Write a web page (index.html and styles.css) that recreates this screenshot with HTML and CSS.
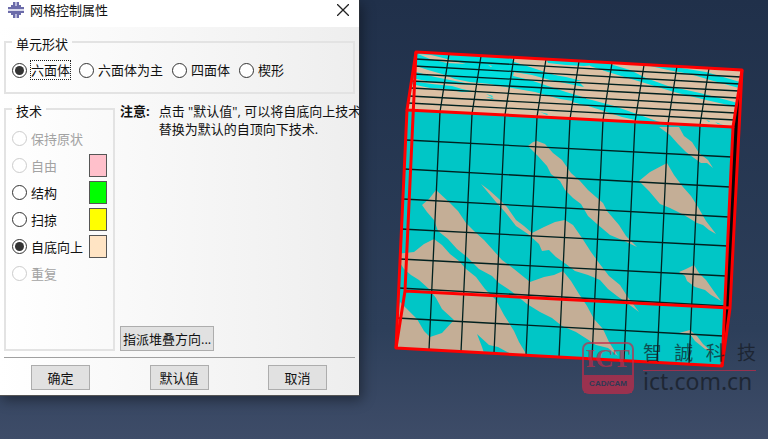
FILE: index.html
```html
<!DOCTYPE html>
<html lang="zh-CN">
<head>
    <meta charset="UTF-8">
    <meta name="viewport" content="width=device-width, initial-scale=1.0">
    <title>网格控制属性</title>
    <link rel="stylesheet" href="styles.css">
</head>
<body>

    <form class="dialog">
        <header class="titlebar">
            <svg class="app-icon" width="16" height="18" viewBox="0 0 16 18" aria-hidden="true">
                <path d="M5 1h6v3h2v2h3v2H0V6h3V4h2zM0 10h16v2h-3v2h-2v3H5v-3H3v-2H0z" fill="#6c6caa"/>
                <path d="M7 1h2v4H7zM7 13h2v4H7z" fill="#b9b9da"/>
                <path d="M0 8h16v2H0z" fill="#d9d9ec"/>
            </svg>
            <h1 class="title">网格控制属性</h1>
            <button type="button" class="close" aria-label="关闭">
                <svg width="12" height="12" viewBox="0 0 12 12" aria-hidden="true">
                    <path d="M0 0l12 12M12 0L0 12" stroke="#222" stroke-width="1.3"/>
                </svg>
            </button>
        </header>

        <div class="content">
            <fieldset class="group shapes">
                <legend>单元形状</legend>
                <label class="option"><input type="radio" name="shape" checked><span class="focused">六面体</span></label>
                <label class="option"><input type="radio" name="shape"><span>六面体为主</span></label>
                <label class="option"><input type="radio" name="shape"><span>四面体</span></label>
                <label class="option"><input type="radio" name="shape"><span>楔形</span></label>
            </fieldset>

            <div class="main">
                <fieldset class="group techniques">
                    <legend>技术</legend>
                    <label class="option"><input type="radio" name="technique" disabled><span>保持原状</span></label>
                    <label class="option"><input type="radio" name="technique" disabled><span>自由</span><i class="swatch pink"></i></label>
                    <label class="option"><input type="radio" name="technique"><span>结构</span><i class="swatch green"></i></label>
                    <label class="option"><input type="radio" name="technique"><span>扫掠</span><i class="swatch yellow"></i></label>
                    <label class="option"><input type="radio" name="technique" checked><span>自底向上</span><i class="swatch bisque"></i></label>
                    <label class="option"><input type="radio" name="technique" disabled><span>重复</span></label>
                </fieldset>

                <div class="side">
                    <div class="note">
                        <strong>注意:</strong>
                        <p>点击 "默认值", 可以将自底向上技术<br>替换为默认的自顶向下技术.</p>
                    </div>
                    <button type="button" class="btn">指派堆叠方向...</button>
                </div>
            </div>

            <footer class="actions">
                <button type="submit" class="btn">确定</button>
                <button type="reset" class="btn">默认值</button>
                <button type="button" class="btn">取消</button>
            </footer>
        </div>
    </form>

    <main class="viewport">
        <svg class="scene" viewBox="360 0 408 439" role="img" aria-label="网格模型">
            <defs>
                <clipPath id="top"><path d="M416 52L742 70L733 127L407 110z"/></clipPath>
                <clipPath id="front"><path d="M407 110L733 127L722 366L396 348z"/></clipPath>
            </defs>

            <!-- right side, seen edge on -->
            <path d="M742 70L730 308L722 366L733 127z" fill="#050808"/>

            <!-- top face -->
            <g clip-path="url(#top)">
                <path d="M400 45h350v90H400z" fill="#dcc0a4"/>
                <g fill="#00dede">
                    <path d="M416 52L511 57L514 62L530 67L548 73L580 83L584 87L550 80L532 75L514 72L513 76L530 80L548 86L566 92L586 98L586 103L560 99L535 92L512 88L490 84L470 82L455 79L442 74L428 70L416 66z"/>
                    <path d="M412 71L435 77L455 81L476 85L452 84L432 82L411 78z"/>
                    <path d="M411 81L432 84L452 86L462 89L476 92L462 92L446 89L430 88L411 84z"/>
                    <path d="M486 94l7 2-1 1zM486 97l8 1-2 1z"/>
                    <path d="M546 59L600 61L610 64L584 66L566 65L548 63z"/>
                    <path d="M548 74L566 77L582 81L566 81z"/>
                    <path d="M590 60L610 64L630 70L646 78L668 86L700 93L738 103L737 107L706 100L674 92L648 84L628 78L608 72L590 66z"/>
                    <path d="M646 65L675 67L706 72L740 82L739 88L710 80L690 74L668 70z"/>
                    <path d="M572 96L592 100L614 106L634 113L668 125L640 121L622 117L604 111L588 106L572 102z"/>
                    <path d="M540 112l8 2-1 1zM551 115l9 3-4-1zM706 120l4 1-1 1zM715 122l8 3-5-1z"/>
                </g>
                <path d="M418 54L431 55L447 59L466 64L447 63L430 59zM488 65l4 1-1 1zM495 67l13 5-3-1z" fill="#dcc0a4"/>
            </g>

            <!-- front face -->
            <g clip-path="url(#front)">
                <path d="M390 105h350v265H390z" fill="#00c6c6"/>
                <g fill="#c4ae96">
                    <path d="M528 146L533 142L537 141L545 144L553 153L562 160L571 173L580 181L588 190L596 197L603 203L607 211L619 225L626 236L637 247L622 240L610 235L597 224L588 216L581 204L573 198L565 190L560 181L551 174L547 166L537 155z"/>
                    <path d="M659 127L679 127L684 136L692 142L699 153L708 160L713 168L707 163L701 163L694 158L686 152L678 144L670 135z"/>
                    <path d="M639 181L650 172L667 163L674 175L683 187L691 196L698 207L706 221L716 234L709 230L703 225L697 223L684 215L670 208L660 204L649 191z"/>
                    <path d="M679 272L686 269L694 265L699 273L706 280L713 290L721 301L711 295L705 290L695 287L687 281L685 276z"/>
                    <path d="M679 333L690 330L697 336L703 344L712 352L705 349L695 341L690 334z"/>
                    <path d="M481 184L489 190L499 199L507 207L516 220L524 226L532 233L544 227L555 222L565 220L573 225L582 238L591 252L599 263L609 276L620 285L627 296L639 312L627 303L617 296L608 289L600 280L588 275L575 271L566 264L556 257L549 250L542 251L539 244L528 234L516 226L505 212L496 202z"/>
                    <path d="M422 205L429 199L436 190L449 202L458 211L466 223L474 231L484 240L493 250L502 260L514 269L530 282L544 277L554 275L563 271L571 281L579 294L587 306L594 319L603 329L609 342L618 356L608 348L596 345L587 339L576 332L562 326L552 318L540 312L527 304L511 291L499 283L492 276L479 269L467 257L457 249L448 239L438 231L434 220L427 212z"/>
                    <path d="M394 254L414 252L424 244L434 239L442 245L450 254L459 261L466 269L476 277L485 289L496 300L504 315L514 331L519 342L528 357L509 353L498 347L489 345L477 334L482 347L485 356L392 352L400 302L407 309L417 319L424 331L430 337L442 333L454 320L442 309L436 298L429 289L419 280L411 275L404 269z"/>
                </g>
            </g>

            <!-- element edges -->
            <g class="edges">
                <path d="M449 54L440 112L429 350M481 56L472 114L461 352M514 57L505 115L494 353M546 59L537 117L526 355M579 61L570 119L559 357M612 63L603 120L592 359M644 65L635 122L624 361M677 66L668 124L657 362M709 68L700 125L689 364"/>
                <path d="M415 59L741 77M414 66L740 84M413 74L739 91M412 81L738 98M411 88L737 106M409 96L736 113M408 103L735 120"/>
                <path d="M406 140L732 157M404 169L730 187M403 199L729 217M401 229L728 246M400 259L726 276M399 288L725 306M397 318L723 336"/>
            </g>

            <!-- part outline -->
            <g class="outline">
                <path d="M416 52L742 70L733 127L407 110z"/>
                <path d="M407 110L396 348L722 366L733 127"/>
                <path d="M416 52L405 291L396 348M405 291L730 308L722 366M730 308L742 70"/>
            </g>
        </svg>

        <div class="watermark">
            <div class="logo">
                <span class="logo-name">ICT</span>
                <span class="logo-sub">CAD/CAM</span>
            </div>
            <div class="brand">
                <div class="brand-name"><span>智</span><span>誠</span><span>科</span><span>技</span></div>
                <div class="brand-site">ict.com.cn</div>
            </div>
        </div>
    </main>

</body>
</html>
```

FILE: styles.css
```css
* {
    box-sizing: border-box;
}
body {
    display: flex;
    align-items: flex-start;
    min-height: 100vh;
    margin: 0;
    overflow: hidden;
    font-family: "Open Sans", "Noto Sans CJK SC", sans-serif;
    font-size: 13px;
    line-height: 18px;
    color: #111;
    background: linear-gradient(#20304a, #2d3f5a 75%, #3e4c68);
}

/* dialog */
.dialog {
    flex: 0 1 360px;
    min-width: 0;
    overflow: hidden;
    border-right: 1px solid #2a2f38;
    border-bottom: 1px solid #555;
    background: linear-gradient(90deg, #fff, #eee);
    box-shadow: 2px 4px 12px rgba(0, 0, 0, 0.4);
}
.titlebar {
    display: flex;
    align-items: center;
    height: 27px;
    padding: 0 10px 7px 8px;
    background: #fff;
}
.title {
    flex: 1;
    margin: 0 0 0 6px;
    font-size: 13px;
    font-weight: normal;
}
.close {
    display: flex;
    padding: 0;
    border: none;
    background: none;
}
.content {
    padding: 4px 4px 5px;
}
.group {
    min-width: 0;
    margin: 0;
    border: 2px solid #e3e3e3;
}
.group legend {
    padding: 4px 4px 0;
}
.option {
    display: flex;
    align-items: center;
    gap: 4px;
}
.option input {
    flex: none;
    display: grid;
    place-items: center;
    appearance: none;
    width: 15px;
    height: 15px;
    margin: 0;
    border: 1px solid #333;
    border-radius: 50%;
    background: #fff;
}
.option input:checked::before {
    content: "";
    width: 9px;
    height: 9px;
    border-radius: 50%;
    background: #333;
}
.option input:disabled {
    border-color: #ccc;
}
.option input:disabled + span {
    color: #a3a3a3;
}
.focused {
    outline: 1px dotted #222;
}
.shapes {
    display: flex;
    gap: 9px;
    padding: 8px 6px 13px;
}
.main {
    display: flex;
    gap: 5px;
    margin-top: 4px;
}
.techniques {
    flex: 0 0 111px;
    min-height: 253px;
    padding: 5px 6px 0;
}
.techniques .option {
    height: 27px;
}
.swatch {
    width: 18px;
    height: 23px;
    margin-left: auto;
    border: 1px solid #555;
}
.pink {
    background: #ffc0cb;
}
.green {
    background: #0f0;
}
.yellow {
    background: #ff0;
}
.bisque {
    background: #ffe4c4;
}
.side {
    flex: 1;
    display: flex;
    flex-direction: column;
    justify-content: space-between;
    align-items: flex-start;
    min-width: 0;
    padding-top: 4px;
}
.note {
    display: flex;
    gap: 9px;
    white-space: nowrap;
}
.note p {
    margin: 0;
}
.btn {
    min-width: 59px;
    height: 25px;
    padding: 0 2px;
    border: 1px solid #adadad;
    background: #e1e1e1;
    color: #111;
    font: inherit;
    line-height: 20px;
}
.actions {
    display: flex;
    justify-content: space-between;
    margin-top: 6px;
    padding: 7px 28px 0 27px;
    border-top: 1px solid #a0a0a0;
}

/* model view */
.viewport {
    flex: 1;
    position: relative;
    min-width: 0;
}
.scene {
    display: block;
    width: 100%;
}
.edges {
    fill: none;
    stroke: #00201f;
    stroke-width: 1.3;
}
.outline {
    fill: none;
    stroke: #f00;
    stroke-width: 3;
    stroke-linejoin: round;
}
.watermark {
    position: absolute;
    right: 12px;
    bottom: 42px;
    display: flex;
    align-items: center;
    gap: 9px;
    opacity: 0.7;
}
.logo {
    display: flex;
    flex-direction: column;
    width: 52px;
    height: 52px;
    border: 2px solid #c52a48;
    border-radius: 7px;
    text-align: center;
    color: #c52a48;
}
.logo-name {
    flex: 1;
    font: bold 25px/29px "Liberation Serif", serif;
}
.logo-sub {
    margin-top: 2px;
    background: #c52a48;
    color: #2a3650;
    font: bold 8px/18px "Liberation Sans", sans-serif;
}
.brand {
    width: 113px;
    color: #151a22;
}
.brand-name {
    display: flex;
    justify-content: space-between;
    font: 19px/28px "Noto Sans CJK TC", sans-serif;
}
.brand-site {
    background: linear-gradient(#c52a48, #c52a48) 0 4px / 100% 1px no-repeat;
    font: 23px/31px "Noto Sans", sans-serif;
}
```
